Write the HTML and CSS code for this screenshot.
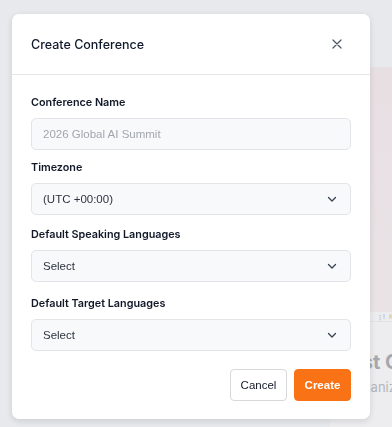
FILE: index.html
```html
<!DOCTYPE html>
<html><head>
<title>Create Conference</title>
<link rel="stylesheet" href="styles.css">
</head><body>

<div class="page">
  <div class="card">
    <div class="cover"></div>
    <div class="tags"><span class="tag-a">&#8942;!</span><span class="tag-b">Keynote</span></div>
    <div class="card-title">Test Conference</div>
    <div class="card-sub">Organizer team</div>
  </div>
</div>

<div class="modal">
  <div class="modal-head">
    <div class="modal-title">Create Conference</div>
    <svg class="close" width="12" height="12" viewBox="0 0 12 12">
      <path d="M2 2l8 8M10 2l-8 8" stroke="#4b5563" stroke-width="1.2" stroke-linecap="round" fill="none"/>
    </svg>
  </div>

  <div class="modal-body">
    <div class="field">
      <label>Conference Name</label>
      <div class="input placeholder">2026 Global AI Summit</div>
    </div>

    <div class="field">
      <label>Timezone</label>
      <div class="input select">(UTC +00:00)
        <svg class="chev" width="12" height="12" viewBox="0 0 12 12"><path d="M2.5 4.5l3.5 3.5 3.5-3.5" stroke="#374151" stroke-width="1.3" fill="none" stroke-linecap="round" stroke-linejoin="round"/></svg>
      </div>
    </div>

    <div class="field langs">
      <label>Default Speaking Languages</label>
      <div class="input select">Select
        <svg class="chev" width="12" height="12" viewBox="0 0 12 12"><path d="M2.5 4.5l3.5 3.5 3.5-3.5" stroke="#374151" stroke-width="1.3" fill="none" stroke-linecap="round" stroke-linejoin="round"/></svg>
      </div>
    </div>

    <div class="field">
      <label>Default Target Languages</label>
      <div class="input select">Select
        <svg class="chev" width="12" height="12" viewBox="0 0 12 12"><path d="M2.5 4.5l3.5 3.5 3.5-3.5" stroke="#374151" stroke-width="1.3" fill="none" stroke-linecap="round" stroke-linejoin="round"/></svg>
      </div>
    </div>

    <div class="actions">
      <button class="btn cancel">Cancel</button>
      <button class="btn create">Create</button>
    </div>
  </div>
</div>

</body></html>
```

FILE: styles.css
```css
html, body {
  margin: 0;
  padding: 0;
  height: 100%;
  }
body {
  background: #e8e9ec;
  font-family: Inter, "Noto Sans", sans-serif;
  overflow: hidden;
  }
.page {
  padding: 67px 0 0 330px;
  }
.card {
  width: 300px;
  background: #ededef;
  padding-bottom: 40px;
  }
.cover {
  height: 245px;
  background: linear-gradient(180deg, #e8dfe3 0%, #e9e3e6 100%);
  }
.tags {
  display: flex;
  gap: 4px;
  padding: 1px 0 0 47px;
  height: 8px;
  font-size: 6px;
  line-height: 8px;
  font-weight: 600;
  border-bottom: 1px solid #e2e2e5;
  }
.tag-a { color: #b4b4ba; }
.tag-b { color: #dccb9c; }
.card-title {
  margin: 26px 0 0 8px;
  font-size: 20px;
  line-height: 28px;
  font-weight: 700;
  color: #a5a8af;
  white-space: nowrap;
  }
.card-sub {
  margin: 3px 0 0 18px;
  font-size: 13px;
  color: #b4b6bc;
  white-space: nowrap;
  }
.modal {
  position: fixed;
  top: 14px;
  left: 12px;
  width: 358px;
  background: #fff;
  border-radius: 7px;
  box-shadow: 0 2px 6px rgba(0, 0, 0, 0.12);
  }
.modal-head {
  display: flex;
  align-items: center;
  justify-content: space-between;
  height: 60px;
  padding: 0 27px 0 19px;
  border-bottom: 1px solid #e5e7eb;
  }
.modal-title {
  font-size: 12.5px;
  font-weight: 500;
  color: #0f172a;
  }
.modal-body {
  padding: 20px 19px 18px;
  }
.field {
  margin-bottom: 12px;
  }
.field:first-child {
  margin-bottom: 10px;
  }
.field.langs {
  margin-bottom: 14px;
  }
.field label {
  display: block;
  font-size: 10.8px;
  line-height: 16px;
  font-weight: 600;
  color: #111827;
  margin-bottom: 7px;
  }
.input {
  display: flex;
  align-items: center;
  justify-content: space-between;
  height: 30px;
  padding: 0 12px 0 11px;
  border: 1px solid #e2e4e8;
  border-radius: 5px;
  background: #f8f9fb;
  font-family: "Liberation Sans", Arial, sans-serif;
  font-size: 11.5px;
  color: #2d3440;
  }
.placeholder {
  color: #a1a6ae;
  }
.chev {
  flex: none;
  }
.actions {
  display: flex;
  justify-content: flex-end;
  gap: 7px;
  margin-top: 18px;
  }
.btn {
  height: 32px;
  border-radius: 4px;
  font-family: "Liberation Sans", Arial, sans-serif;
  font-size: 11.5px;
  padding: 0;
  }
.cancel {
  width: 57px;
  background: #fff;
  border: 1px solid #d6d8dc;
  color: #111827;
  }
.create {
  width: 57px;
  background: #f97316;
  border: 1px solid #f97316;
  color: #fff;
  font-weight: 700;
  }
```
